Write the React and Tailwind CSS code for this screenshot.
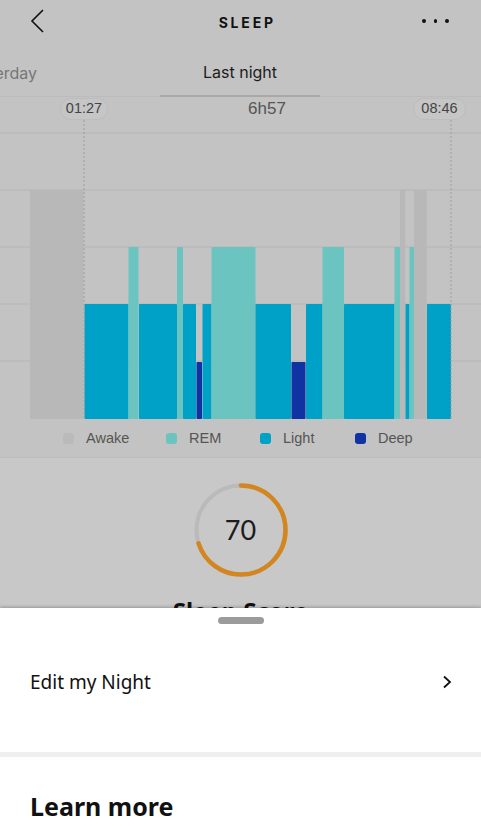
import React from 'react';

// Hypnogram segments: [x0, x1, stage]
const SEGMENTS = [
  [30, 83.5, 'awake'],
  [84.5, 128.5, 'light'],
  [128.5, 138.5, 'rem'],
  [139, 177, 'light'],
  [177, 183, 'rem'],
  [183, 196, 'light'],
  [196.5, 202, 'deep'],
  [202.5, 211.5, 'light'],
  [211.5, 255.5, 'rem'],
  [255.5, 291, 'light'],
  [291.5, 305.5, 'deep'],
  [306, 322.5, 'light'],
  [322.5, 344, 'rem'],
  [344, 394.5, 'light'],
  [394.5, 400, 'rem'],
  [400, 405.3, 'awake'],
  [405.5, 409.5, 'light'],
  [409.5, 414, 'rem'],
  [414, 426.7, 'awake'],
  [427, 451, 'light'],
];

const STAGE = {
  awake: { top: 93, color: '#b8b8b8' },
  rem: { top: 150, color: '#6cc4c1' },
  light: { top: 207, color: '#00a1c7' },
  deep: { top: 265, color: '#0f33a3' },
};

const BASE = 322;
const GRID = [36, 93, 150, 207, 264];

function Hypnogram() {
  return (
    <svg width="481" height="323" viewBox="0 0 481 323" className="absolute inset-0">
      {GRID.map(y => (
        <line key={y} x1="0" x2="481" y1={y} y2={y} stroke="#b5b5b5" strokeWidth="1.2" />
      ))}
      {SEGMENTS.map(([x0, x1, s], i) => (
        <rect key={i} x={x0} y={STAGE[s].top} width={x1 - x0} height={BASE - STAGE[s].top}
          fill={STAGE[s].color} rx="0.8" />
      ))}
      <line x1="84" x2="84" y1="23" y2={BASE} stroke="#9d9d9d" strokeWidth="1" strokeDasharray="2 2" />
      <line x1="451" x2="451" y1="23" y2={BASE} stroke="#9d9d9d" strokeWidth="1" strokeDasharray="2 2" />
    </svg>
  );
}

function ScoreRing({ value }) {
  const r = 44.5;
  const c = 2 * Math.PI * r;
  return (
    <div className="relative w-[100px] h-[100px]">
      <svg width="100" height="100" viewBox="0 0 100 100">
        <circle cx="50" cy="50" r={r} fill="none" stroke="#bababa" strokeWidth="4" />
        <circle cx="50" cy="50" r={r} fill="none" stroke="#d3851f" strokeWidth="4.5"
          strokeDasharray={`${(c * value) / 100} ${c}`} transform="rotate(-90 50 50)" strokeLinecap="round" />
      </svg>
      <div className="absolute inset-0 flex items-center justify-center text-[27px] font-normal text-[#1c1c1c] font-['Lato',sans-serif]">
        {value}
      </div>
    </div>
  );
}

const LEGEND = [
  ['Awake', '#bababa', 'w-[103px]'],
  ['REM', '#6cc4c1', 'w-[94px]'],
  ['Light', '#00a1c7', 'w-[95px]'],
  ['Deep', '#0f33a3', 'w-[80px]'],
];

export default function App() {
  return (
    <div className="w-[481px] h-[827px] flex flex-col overflow-hidden bg-white font-['Inter',sans-serif]">
      <div className="flex-1 overflow-hidden bg-[#c3c3c3] flex flex-col">
        {/* Header */}
        <div className="h-[42px] shrink-0 flex items-center justify-between px-[30px]">
          <svg width="16" height="26" viewBox="0 0 16 26">
            <polyline points="13,2 2,13 13,24" fill="none" stroke="#111" strokeWidth="1.6" />
          </svg>
          <div className="text-[14px] font-bold tracking-[0.2em] text-[#111] ml-[26px] pt-[2px]">SLEEP</div>
          <div className="flex gap-[8px] pr-[2px]">
            <span className="w-[3.5px] h-[3.5px] rounded-full bg-[#111]" />
            <span className="w-[3.5px] h-[3.5px] rounded-full bg-[#111]" />
            <span className="w-[3.5px] h-[3.5px] rounded-full bg-[#111]" />
          </div>
        </div>

        {/* Tabs */}
        <div className="h-[55px] shrink-0 relative flex border-b border-[#bcbcbc]">
          <div className="w-[160px] flex items-center justify-end pr-[123px] pt-[7px] text-[16px] text-[#777]">
            <span className="whitespace-nowrap">erday</span>
          </div>
          <div className="w-[160px] flex items-center justify-center pt-[7px] text-[16px] text-[#1c1c1c] border-b-2 border-[#a8a8a8] -mb-[1px]">
            Last night
          </div>
        </div>

        {/* Chart */}
        <div className="relative h-[323px] shrink-0 font-['Liberation_Sans',sans-serif]">
          <Hypnogram />
          <div className="absolute left-[60px] top-[1px] w-[48px] h-[22px] rounded-full bg-[#c6c6c6] border border-[#bdbdbd] flex items-center justify-center text-[14.5px] text-[#444]">
            01:27
          </div>
          <div className="absolute left-[244px] top-[1px] w-[46px] h-[22px] flex items-center justify-center text-[17px] text-[#555]">
            6h57
          </div>
          <div className="absolute left-[413px] top-[1px] w-[53px] h-[22px] rounded-full bg-[#c6c6c6] border border-[#bdbdbd] flex items-center justify-center text-[14.5px] text-[#444]">
            08:46
          </div>
        </div>

        {/* Legend */}
        <div className="h-[38px] shrink-0 flex items-center pl-[63px] border-b border-[#bdbdbd] font-['Liberation_Sans',sans-serif]">
          {LEGEND.map(([label, color, w]) => (
            <div key={label} className={`${w} flex items-center gap-[12px]`}>
              <span className="w-[11px] h-[11px] rounded-[3px]" style={{ background: color }} />
              <span className="text-[14.5px] text-[#555]">{label}</span>
            </div>
          ))}
        </div>

        {/* Score */}
        <div className="flex-1 bg-[#c8c8c8] flex flex-col items-center pt-[22px]">
          <ScoreRing value={70} />
          <div className="mt-[19px] text-[24px] leading-none font-bold text-[#111] font-['Noto_Sans',sans-serif]">
            Sleep Score
          </div>
        </div>
      </div>

      {/* Bottom sheet */}
      <div className="h-[219px] shrink-0 bg-white shadow-[0_-1px_3px_rgba(0,0,0,0.25)] relative flex flex-col font-['Noto_Sans',sans-serif]">
        <div className="pt-[9px] flex justify-center">
          <span className="w-[46px] h-[7px] rounded-full bg-[#9b9b9b]" />
        </div>
        <div className="h-[128px] pb-[12px] flex items-center justify-between px-[30px]">
          <span className="text-[19px] text-[#111]">Edit my Night</span>
          <svg width="12" height="14" viewBox="0 0 12 14" className="mr-[-2px]">
            <polyline points="3,1.5 9,7 3,12.5" fill="none" stroke="#111" strokeWidth="1.8" />
          </svg>
        </div>
        <div className="h-[5px] bg-[#efefef]" />
        <div className="pt-[34px] px-[30px] text-[25px] leading-[30px] font-bold text-[#111]">
          Learn more
        </div>
      </div>
    </div>
  );
}
